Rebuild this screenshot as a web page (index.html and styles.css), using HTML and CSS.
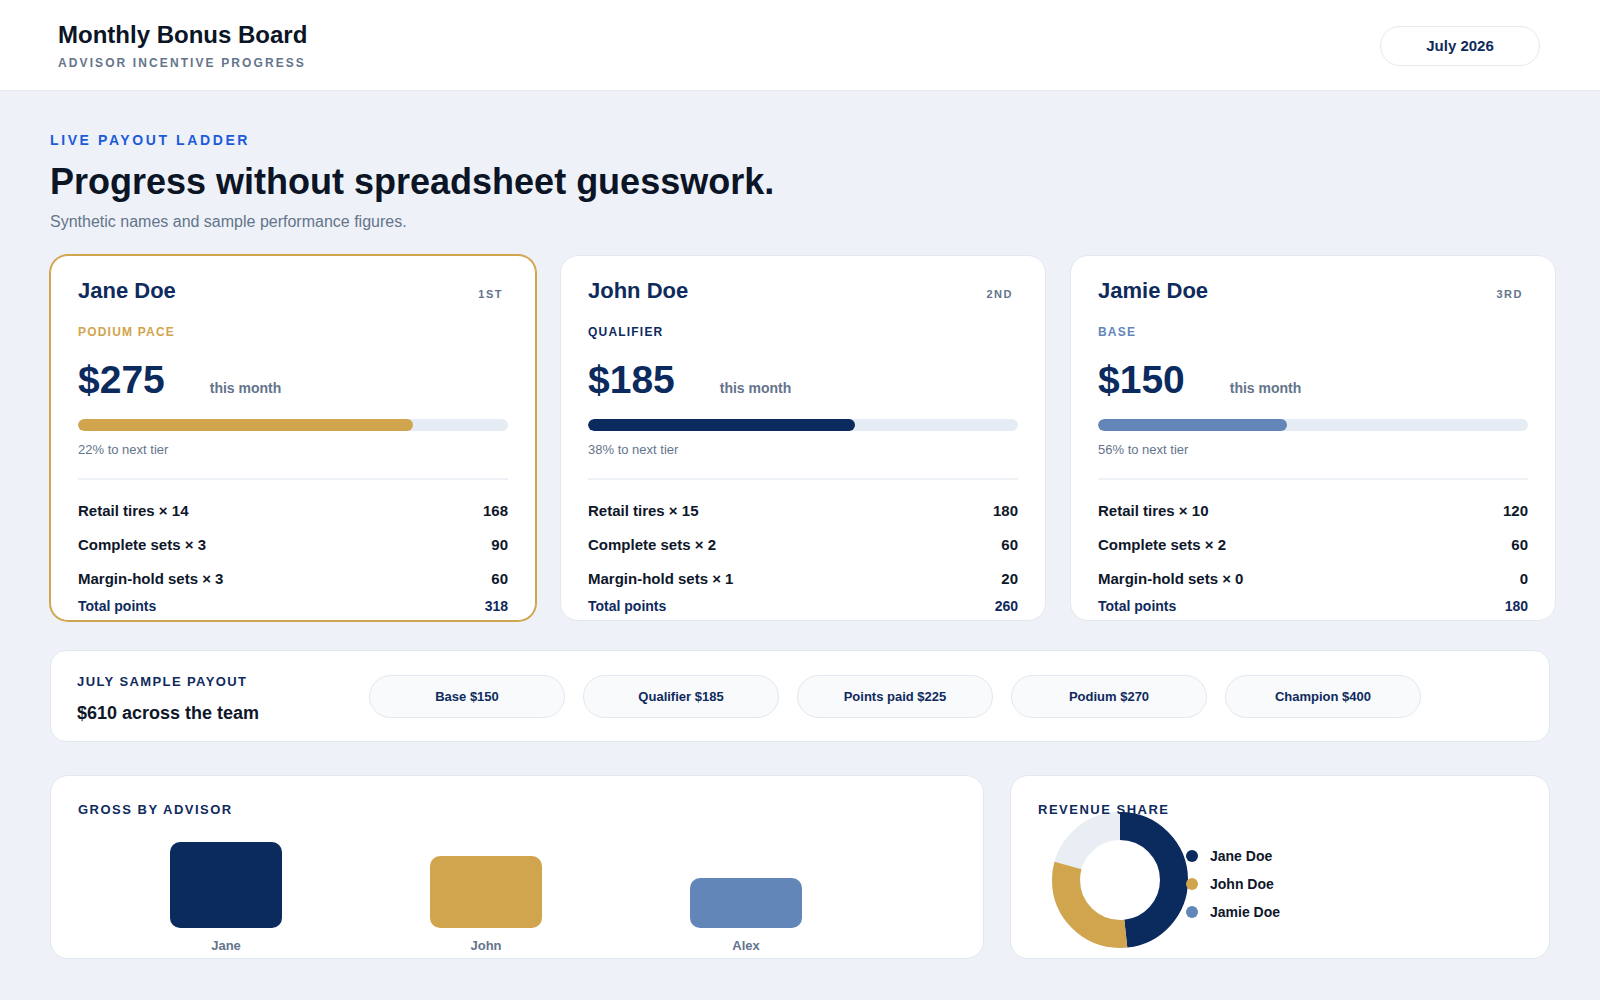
FILE: index.html
```html
<!DOCTYPE html>
<html lang="en">
<head>
    <meta charset="UTF-8">
    <meta name="viewport" content="width=device-width, initial-scale=1.0">
    <title>Monthly Bonus Board</title>
    <link rel="stylesheet" href="styles.css">
</head>
<body>
    <header class="topbar">
        <div class="brand">
            <h1>Monthly Bonus Board</h1>
            <p>Advisor incentive progress</p>
        </div>
        <div class="month-pill">July 2026</div>
    </header>

    <main class="board">
        <section class="intro">
            <p class="eyebrow">Live payout ladder</p>
            <h2>Progress without spreadsheet guesswork.</h2>
            <p class="lede">Synthetic names and sample performance figures.</p>
        </section>

        <section class="advisors">
            <article class="advisor leader">
                <div class="advisor-head">
                    <h3>Jane Doe</h3>
                    <span class="rank">1st</span>
                </div>
                <p class="tier tier-podium">Podium pace</p>
                <div class="amount-row">
                    <span class="amount">$275</span>
                    <span class="period">this month</span>
                </div>
                <div class="track"><div class="fill fill-gold" style="width: 78%"></div></div>
                <p class="hint">22% to next tier</p>
                <ul class="points">
                    <li><span>Retail tires × 14</span><span>168</span></li>
                    <li><span>Complete sets × 3</span><span>90</span></li>
                    <li><span>Margin-hold sets × 3</span><span>60</span></li>
                    <li class="total"><span>Total points</span><span>318</span></li>
                </ul>
            </article>

            <article class="advisor">
                <div class="advisor-head">
                    <h3>John Doe</h3>
                    <span class="rank">2nd</span>
                </div>
                <p class="tier tier-qualifier">Qualifier</p>
                <div class="amount-row">
                    <span class="amount">$185</span>
                    <span class="period">this month</span>
                </div>
                <div class="track"><div class="fill fill-navy" style="width: 62%"></div></div>
                <p class="hint">38% to next tier</p>
                <ul class="points">
                    <li><span>Retail tires × 15</span><span>180</span></li>
                    <li><span>Complete sets × 2</span><span>60</span></li>
                    <li><span>Margin-hold sets × 1</span><span>20</span></li>
                    <li class="total"><span>Total points</span><span>260</span></li>
                </ul>
            </article>

            <article class="advisor">
                <div class="advisor-head">
                    <h3>Jamie Doe</h3>
                    <span class="rank">3rd</span>
                </div>
                <p class="tier tier-base">Base</p>
                <div class="amount-row">
                    <span class="amount">$150</span>
                    <span class="period">this month</span>
                </div>
                <div class="track"><div class="fill fill-blue" style="width: 44%"></div></div>
                <p class="hint">56% to next tier</p>
                <ul class="points">
                    <li><span>Retail tires × 10</span><span>120</span></li>
                    <li><span>Complete sets × 2</span><span>60</span></li>
                    <li><span>Margin-hold sets × 0</span><span>0</span></li>
                    <li class="total"><span>Total points</span><span>180</span></li>
                </ul>
            </article>
        </section>

        <section class="payout">
            <div class="payout-summary">
                <p class="payout-label">July sample payout</p>
                <p class="payout-total">$610 across the team</p>
            </div>
            <div class="tiers">
                <span class="tier-pill">Base $150</span>
                <span class="tier-pill">Qualifier $185</span>
                <span class="tier-pill">Points paid $225</span>
                <span class="tier-pill">Podium $270</span>
                <span class="tier-pill">Champion $400</span>
            </div>
        </section>

        <section class="charts">
            <div class="panel">
                <h4 class="panel-title">Gross by advisor</h4>
                <div class="bars">
                    <div class="bar-col">
                        <div class="bar-area"><div class="bar bar-navy" style="height: 86px"></div></div>
                        <span class="bar-label">Jane</span>
                    </div>
                    <div class="bar-col">
                        <div class="bar-area"><div class="bar bar-gold" style="height: 72px"></div></div>
                        <span class="bar-label">John</span>
                    </div>
                    <div class="bar-col">
                        <div class="bar-area"><div class="bar bar-blue" style="height: 50px"></div></div>
                        <span class="bar-label">Alex</span>
                    </div>
                </div>
            </div>

            <div class="panel">
                <h4 class="panel-title">Revenue share</h4>
                <div class="share">
                    <svg class="donut" width="136" height="136" viewBox="0 0 136 136">
                        <circle cx="68" cy="68" r="54" fill="none" stroke="#e9eef4" stroke-width="28"/>
                        <circle cx="68" cy="68" r="54" fill="none" stroke="#0b2a5e" stroke-width="28"
                                stroke-dasharray="163.5 339.3" transform="rotate(-90 68 68)"/>
                        <circle cx="68" cy="68" r="54" fill="none" stroke="#d1a54e" stroke-width="28"
                                stroke-dasharray="105.2 339.3" stroke-dashoffset="-163.5" transform="rotate(-90 68 68)"/>
                    </svg>
                    <ul class="legend">
                        <li><span class="dot dot-navy"></span>Jane Doe</li>
                        <li><span class="dot dot-gold"></span>John Doe</li>
                        <li><span class="dot dot-blue"></span>Jamie Doe</li>
                    </ul>
                </div>
            </div>
        </section>
    </main>
</body>
</html>
```

FILE: styles.css
```css
body {
    margin: 0;
    font-family: "Liberation Sans", Arial, sans-serif;
    background-color: #eef2f8;
    color: #0f172a;
}
h1, h2, h3, h4, p, ul {
    margin: 0;
    padding: 0;
}
ul {
    list-style: none;
}

/* top bar */
.topbar {
    display: flex;
    align-items: center;
    justify-content: space-between;
    padding: 21px 60px 20px 58px;
    background-color: #ffffff;
    border-bottom: 1px solid #e6ebf2;
}
.brand h1 {
    font-size: 24px;
    line-height: 28px;
    font-weight: 700;
    color: #0b1526;
}
.brand p {
    margin-top: 7px;
    font-size: 12px;
    line-height: 14px;
    font-weight: 700;
    letter-spacing: 2.1px;
    text-transform: uppercase;
    color: #64748b;
}
.month-pill {
    width: 158px;
    height: 38px;
    display: flex;
    align-items: center;
    justify-content: center;
    border: 1px solid #e5e9f0;
    border-radius: 20px;
    font-size: 15px;
    font-weight: 700;
    color: #0f2a5c;
}

/* page body */
.board {
    padding: 40px 50px 40px;
}
.eyebrow {
    font-size: 14px;
    line-height: 18px;
    font-weight: 700;
    letter-spacing: 2.6px;
    text-transform: uppercase;
    color: #1d5bd8;
}
.intro h2 {
    margin-top: 12px;
    font-size: 36px;
    line-height: 42px;
    font-weight: 700;
    color: #0b1526;
}
.lede {
    margin-top: 9px;
    font-size: 16px;
    line-height: 20px;
    color: #64748b;
}

/* advisor cards */
.advisors {
    display: grid;
    grid-template-columns: repeat(3, 486px);
    gap: 24px;
    margin-top: 23px;
}
.advisor {
    background-color: #ffffff;
    border: 1px solid #e3e8ef;
    border-radius: 18px;
    padding: 22px 27px 4px;
}
.advisor.leader {
    border-color: #d1a54e;
    box-shadow: 0 0 0 1px #d1a54e;
}
.advisor-head {
    display: flex;
    justify-content: space-between;
    align-items: baseline;
}
.advisor-head h3 {
    font-size: 22px;
    line-height: 26px;
    font-weight: 700;
    color: #0f2a5c;
}
.rank {
    margin-right: 5px;
    font-size: 11px;
    font-weight: 700;
    letter-spacing: 1.5px;
    text-transform: uppercase;
    color: #64748b;
}
.tier {
    margin-top: 20px;
    font-size: 12px;
    line-height: 16px;
    font-weight: 700;
    letter-spacing: 1.2px;
    text-transform: uppercase;
}
.tier-podium { color: #d1a54e; }
.tier-qualifier { color: #0b2a5e; }
.tier-base { color: #6386b9; }
.amount-row {
    display: flex;
    align-items: baseline;
    margin-top: 18px;
}
.amount {
    font-size: 39px;
    line-height: 44px;
    font-weight: 700;
    color: #0b2a5e;
}
.period {
    margin-left: 45px;
    font-size: 14px;
    font-weight: 700;
    color: #64748b;
}
.track {
    height: 12px;
    margin-top: 17px;
    background-color: #e6ecf3;
    border-radius: 6px;
    overflow: hidden;
}
.fill {
    height: 100%;
    border-radius: 6px;
}
.fill-gold { background-color: #d1a54e; }
.fill-navy { background-color: #0b2a5e; }
.fill-blue { background-color: #6386b9; }
.hint {
    margin-top: 11px;
    font-size: 13px;
    line-height: 16px;
    color: #64748b;
}
.points {
    margin-top: 20px;
    padding-top: 14px;
    border-top: 2px solid #eef1f6;
}
.points li {
    display: flex;
    justify-content: space-between;
    font-size: 15px;
    line-height: 34px;
    font-weight: 700;
    color: #0f172a;
}
.points li.total {
    font-size: 14px;
    line-height: 20px;
    color: #0f2a5c;
}

/* payout strip */
.payout {
    display: flex;
    align-items: center;
    gap: 26px;
    height: 90px;
    margin-top: 29px;
    padding: 0 26px;
    background-color: #ffffff;
    border: 1px solid #e3e8ef;
    border-radius: 16px;
}
.payout-summary {
    width: 266px;
    margin-top: 6px;
}
.payout-label {
    font-size: 13px;
    line-height: 16px;
    font-weight: 700;
    letter-spacing: 1.4px;
    text-transform: uppercase;
    color: #0f2a5c;
}
.payout-total {
    margin-top: 12px;
    font-size: 18px;
    line-height: 22px;
    font-weight: 700;
    color: #0f172a;
}
.tiers {
    display: flex;
    gap: 18px;
}
.tier-pill {
    width: 194px;
    height: 41px;
    display: flex;
    align-items: center;
    justify-content: center;
    background-color: #f8fafc;
    border: 1px solid #e2e8f0;
    border-radius: 22px;
    font-size: 13px;
    font-weight: 700;
    color: #0f2a5c;
}

/* charts */
.charts {
    display: grid;
    grid-template-columns: 934px 1fr;
    gap: 26px;
    margin-top: 33px;
}
.panel {
    background-color: #ffffff;
    border: 1px solid #e3e8ef;
    border-radius: 18px;
    padding: 26px 27px 4px;
}
.panel-title {
    position: relative;
    z-index: 1;
    font-size: 13px;
    line-height: 16px;
    font-weight: 700;
    letter-spacing: 1.5px;
    text-transform: uppercase;
    color: #0f2a5c;
}
.bars {
    display: flex;
    gap: 148px;
    padding-left: 92px;
}
.bar-col {
    width: 112px;
    display: flex;
    flex-direction: column;
    align-items: center;
}
.bar-area {
    width: 100%;
    height: 110px;
    display: flex;
    align-items: flex-end;
}
.bar {
    width: 100%;
    border-radius: 10px;
}
.bar-navy { background-color: #0b2a5e; }
.bar-gold { background-color: #d1a54e; }
.bar-blue { background-color: #6386b9; }
.bar-label {
    margin-top: 10px;
    font-size: 13px;
    line-height: 16px;
    font-weight: 700;
    color: #64748b;
}
.share {
    display: flex;
    align-items: center;
    margin-top: -6px;
    padding-left: 14px;
}
.donut {
    display: block;
}
.legend {
    margin-left: -2px;
    padding-top: 7px;
}
.legend li {
    display: flex;
    align-items: center;
    gap: 12px;
    font-size: 14px;
    line-height: 28px;
    font-weight: 700;
    color: #0f172a;
}
.dot {
    width: 12px;
    height: 12px;
    border-radius: 50%;
}
.dot-navy { background-color: #0b2a5e; }
.dot-gold { background-color: #d1a54e; }
.dot-blue { background-color: #6386b9; }
```
